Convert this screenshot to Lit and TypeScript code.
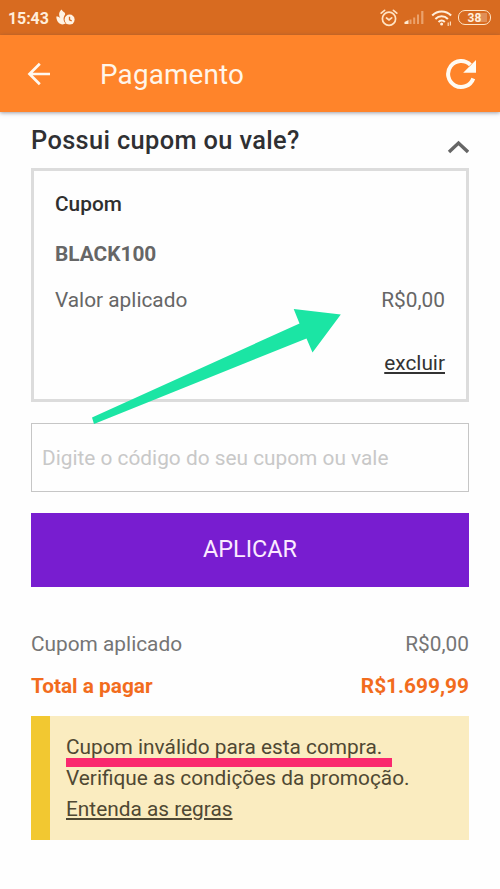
import { LitElement, html, css } from "lit";
import { customElement } from "lit/decorators.js";

@customElement("status-bar")
class StatusBar extends LitElement {
  static styles = css`
    :host { display: flex; align-items: center; height: 35px; background: #d86b20; color: #ffeedb; flex: none; box-sizing: border-box; padding: 0 9px 0 8px; }
    .time { font-size: 16px; font-weight: 700; letter-spacing: -0.1px; line-height: 35px; padding-top: 1px; width: 48px; }
    .spacer { flex: 1; }
    svg { display: block; flex: none; }
    .leaf { width: 19px; height: 17px; }
    .icons { display: flex; align-items: center; }
    .alarm { width: 18px; height: 18px; margin-right: 6px; }
    .signal { width: 21px; height: 15px; margin-right: 6px; }
    .wifi { width: 22px; height: 18px; margin-right: 5px; }
    .battery { box-sizing: border-box; width: 33px; height: 15px; border: 1.6px solid #ffe6c8; border-radius: 7px; display: flex; align-items: center; justify-content: center; font-size: 12px; font-weight: 700; line-height: 12px; background: linear-gradient(#e08f58, #e08f58) 19px center / 9px 9px no-repeat; }
  `;
  render() {
    return html`
      <div class="time">15:43</div>
      <svg class="leaf" viewBox="0 0 19 17">
        <path d="M0.300 7.500C2 7.300 3.300 8 4.300 9.300C2.500 5.500 2.800 3 5.500 0.500C6.500 2 7.200 2.500 8.800 3.700C9.500 5 9 6 8.200 7C7 9.500 7.300 12.500 9.800 14.600C5 17 0.500 13.800 0.300 7.500Z" fill="#fff3e4"/>
        <circle cx="13.600" cy="10.600" r="5" fill="#fff3e4"/>
        <path d="M13.500 7.800V10.900L15.700 11.900" fill="none" stroke="#d86b20" stroke-width="1.300"/>
      </svg>
      <div class="spacer"></div>
      <div class="icons">
        <svg class="alarm" viewBox="0 0 18 18" fill="none" stroke="#ffe3c2" stroke-width="1.700" stroke-linecap="round">
          <circle cx="9" cy="9.800" r="6.600"/>
          <path d="M1.200 4.200L4.600 1.400M16.800 4.200L13.400 1.400M6.500 9L9 11L11.700 8.800"/>
        </svg>
        <svg class="signal" viewBox="0 0 21 15">
          <path d="M0.500 14V12L4.500 10V14Z" fill="#ffead0"/>
          <path d="M5.500 9.500H7.500V14H5.500ZM9.200 7.500H11.200V14H9.200ZM13 4.500H15V14H13ZM17.200 1H19.400V14H17.200Z" fill="#eba26c"/>
        </svg>
        <svg class="wifi" viewBox="0 0 22 18" fill="none" stroke="#ffeedb" stroke-width="2.100">
          <path d="M1.200 6.600C6.500 1.200 14.800 1.200 20.100 6.600M4.400 9.900C8 6.400 13.300 6.400 16.900 9.900M7.500 13C9.500 11.100 11.800 11.100 13.800 13"/>
          <circle cx="10.600" cy="15" r="1.500" fill="#ffeedb" stroke="none"/>
          <path d="M17.200 13.500V17M19.400 12.500V16.500" stroke-width="1.200" stroke="#ffdcb8"/>
        </svg>
        <div class="battery">38</div>
      </div>`;
  }
}

@customElement("page-header")
class PageHeader extends LitElement {
  static styles = css`
    :host { display: flex; align-items: center; height: 77px; flex: none; background: #ff842a; color: #fff5e9; box-shadow: 0 1px 4px rgba(60, 60, 80, 0.5); box-sizing: border-box; padding: 0 22px 0 27px; position: relative; }
    .back { width: 24px; height: 24px; margin-right: 49px; }
    .title { flex: 1; font-size: 27.8px; line-height: 36px; letter-spacing: 0.2px; padding-top: 3px; }
    .reload { width: 33px; height: 32px; }
  `;
  render() {
    return html`
      <svg class="back" viewBox="0 0 24 24" fill="none" stroke="#fff8f0" stroke-width="2.700">
        <path d="M23 12H2.500M12.800 1.700L2.500 12L12.800 22.300"/>
      </svg>
      <div class="title">Pagamento</div>
      <svg class="reload" viewBox="0 0 33 32">
        <path d="M25.400 6.900A13 13 0 1 0 28.300 20.500" fill="none" stroke="#fffaf2" stroke-width="4"/>
        <path d="M31 2V14.800H18.200Z" fill="#fffaf2"/>
      </svg>`;
  }
}

@customElement("coupon-card")
class CouponCard extends LitElement {
  static styles = css`
    :host { display: block; box-sizing: border-box; height: 234px; border: 3px solid #dcdcdc; padding: 18px 21px 0; color: #666; }
    .name { color: #2f2f2f; font-weight: 500; line-height: 30px; }
    .code { font-weight: 700; line-height: 30px; margin-top: 20px; }
    .row { display: flex; justify-content: space-between; line-height: 30px; margin-top: 16px; }
    .remove { text-align: right; margin-top: 32.500px; line-height: 30px; }
    a { color: #333; text-decoration: underline; text-decoration-thickness: 2px; text-underline-offset: 2px; }
  `;
  render() {
    return html`
      <div class="name">Cupom</div>
      <div class="code">BLACK100</div>
      <div class="row"><span>Valor aplicado</span><span>R$0,00</span></div>
      <div class="remove"><a>excluir</a></div>`;
  }
}

@customElement("app-root")
class AppRoot extends LitElement {
  static styles = css`
    :host { display: flex; flex-direction: column; position: relative; width: 500px; height: 889px; overflow: hidden; background: #fefefe; font-family: Roboto, sans-serif; font-size: 20.83px; }
    main { padding: 0 31px; }
    .heading { display: flex; justify-content: space-between; height: 56px; color: #2f3033; }
    h2 { margin: 0; padding-top: 12.500px; font-size: 25.400px; font-weight: 500; line-height: 30px; letter-spacing: 0.350px; }
    .chevron { width: 22px; height: 14px; margin-top: 28px; }
    .field { box-sizing: border-box; height: 69px; margin-top: 21px; border: 1px solid #c6c6c6; padding: 0 10px; line-height: 68px; color: #c8c8c8; }
    .apply { height: 74px; margin-top: 21px; background: #781dd0; color: #fbeaff; font-size: 23.400px; line-height: 72px; text-align: center; }
    .row { display: flex; justify-content: space-between; color: #757575; line-height: 30px; }
    .first { margin-top: 42px; }
    .total { margin-top: 12px; color: #f26c1d; font-weight: 700; }
    .alert { position: relative; box-sizing: border-box; height: 124px; margin-top: 15px; border-left: 19px solid #f2c831; background: #faecc0; padding: 15.500px 0 0 16px; color: #4f4833; line-height: 31.250px; }
    .alert a { text-decoration: underline; text-decoration-thickness: 2px; text-underline-offset: 2px; }
    .stroke { position: absolute; left: 16px; top: 42px; width: 326px; height: 9px; background: #fa286e; }
    .arrow { position: absolute; left: 88px; top: 304px; width: 256px; height: 124px; }
  `;
  render() {
    return html`
      <status-bar></status-bar>
      <page-header></page-header>
      <main>
        <div class="heading">
          <h2>Possui cupom ou vale?</h2>
          <svg class="chevron" viewBox="0 0 22 14"><path d="M2 12L11.500 3L21 12" fill="none" stroke="#666" stroke-width="3.400"/></svg>
        </div>
        <coupon-card></coupon-card>
        <div class="field">Digite o código do seu cupom ou vale</div>
        <div class="apply">APLICAR</div>
        <div class="row first"><span>Cupom aplicado</span><span>R$0,00</span></div>
        <div class="row total"><span>Total a pagar</span><span>R$1.699,99</span></div>
        <div class="alert">
          <div>Cupom inválido para esta compra.</div>
          <div>Verifique as condições da promoção.</div>
          <a>Entenda as regras</a>
          <div class="stroke"></div>
        </div>
      </main>
      <svg class="arrow" viewBox="88 304 256 124">
        <path d="M92 417.500L299.500 323.500L293.700 309L340.800 314.500L312.500 352.500L306.500 338.500L94 424Z" fill="#1be5a4"/>
      </svg>`;
  }
}
